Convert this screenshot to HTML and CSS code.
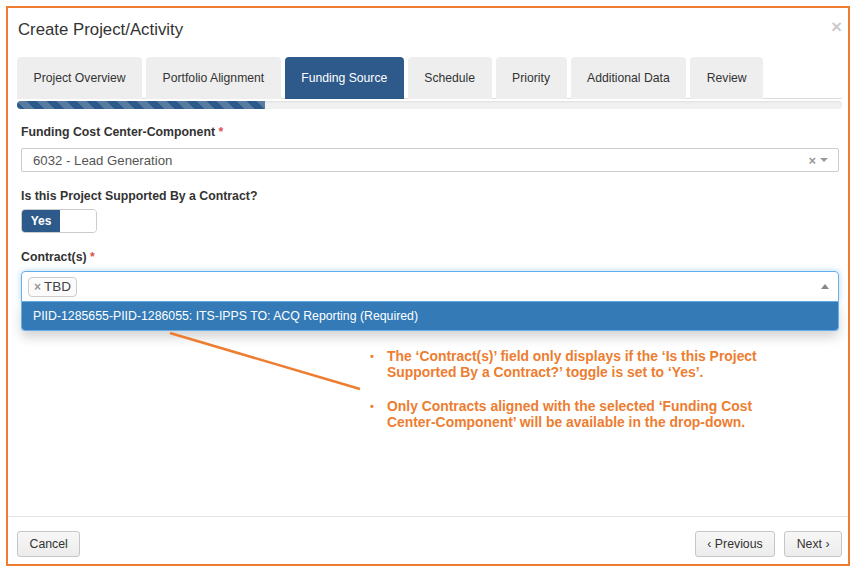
FILE: index.html
```html
<!DOCTYPE html>
<html lang="en">
<head>
    <meta charset="UTF-8">
    <meta name="viewport" content="width=device-width, initial-scale=1.0">
    <title>Create Project/Activity</title>
    <link rel="stylesheet" href="styles.css">
</head>
<body>
    <div class="modal">
        <div class="modal-header">
            <h4 class="modal-title">Create Project/Activity</h4>
            <span class="close">&times;</span>
        </div>

        <div class="modal-body">
            <ul class="nav-tabs">
                <li>Project Overview</li>
                <li>Portfolio Alignment</li>
                <li class="active">Funding Source</li>
                <li>Schedule</li>
                <li>Priority</li>
                <li>Additional Data</li>
                <li>Review</li>
            </ul>
            <div class="progress"><div class="progress-bar" style="width: 30%;"></div></div>

            <form class="wizard-form">
                <label class="field-label">Funding Cost Center-Component <span class="req">*</span></label>
                <div class="select">
                    <span class="select-value">6032 - Lead Generation</span>
                    <span class="select-clear">&times;</span>
                    <span class="caret-down"></span>
                </div>

                <label class="field-label toggle-label">Is this Project Supported By a Contract?</label>
                <div class="toggle">
                    <span class="toggle-on">Yes</span>
                    <span class="toggle-off"></span>
                </div>

                <label class="field-label multi-label">Contract(s) <span class="req">*</span></label>
                <div class="multi">
                    <span class="tag"><span class="tag-remove">&times;</span>TBD</span>
                    <span class="caret-up"></span>
                </div>
                <ul class="dropdown">
                    <li class="highlighted">PIID-1285655-PIID-1286055: ITS-IPPS TO: ACQ Reporting (Required)</li>
                </ul>

                <ul class="notes">
                    <li>The &lsquo;Contract(s)&rsquo; field only displays if the &lsquo;Is this Project<br>Supported By a Contract?&rsquo; toggle is set to &lsquo;Yes&rsquo;.</li>
                    <li>Only Contracts aligned with the selected &lsquo;Funding Cost<br>Center-Component&rsquo; will be available in the drop-down.</li>
                </ul>
            </form>

            <!-- callout pointer from the dropdown to the notes -->
            <svg class="callout-line" width="200" height="64" viewBox="0 0 200 64">
                <line x1="2" y1="2" x2="192" y2="58" stroke="#ed7d31" stroke-width="2.5"/>
            </svg>
        </div>

        <div class="modal-footer">
            <button type="button" class="btn">Cancel</button>
            <div class="btn-group">
                <button type="button" class="btn">&lsaquo; Previous</button>
                <button type="button" class="btn">Next &rsaquo;</button>
            </div>
        </div>
    </div>
</body>
</html>
```

FILE: styles.css
```css
* { box-sizing: border-box; }
body { margin: 0; font-family: "Liberation Sans", Arial, sans-serif; color: #333; background: #fff; }

.modal { margin: 6px; width: 844px; height: 560px; border: 2px solid #ed7d31; display: flex; flex-direction: column; }

.modal-header { display: flex; justify-content: space-between; align-items: flex-start; padding: 12px 6px 0 10px; }
.modal-title { margin: 0; font-size: 16.8px; font-weight: normal; line-height: 20px; color: #333; }
.close { font-size: 19px; font-weight: bold; line-height: 20px; color: #000; opacity: .2; margin-top: -3px; }

.modal-body { position: relative; flex: 1; padding: 17px 6px 0 9px; }

.nav-tabs { list-style: none; margin: 0; padding: 0; display: flex; border-bottom: 1px solid #ddd; }
.nav-tabs li { height: 42px; line-height: 42px; padding: 0 16.5px; margin-right: 4px; margin-bottom: -1px; font-size: 12.2px; color: #333; background: #eee; border-radius: 4px 4px 0 0; }
.nav-tabs li.active { background: #2e5a8b; color: #fff; }

.progress { height: 8px; margin-top: 2px; background: #f1f1f1; border-radius: 4px; overflow: hidden; box-shadow: inset 0 1px 2px rgba(0,0,0,.08); }
.progress-bar { height: 100%; background-color: #2e5a8b; background-image: linear-gradient(45deg, rgba(255,255,255,.2) 25%, transparent 25%, transparent 50%, rgba(255,255,255,.2) 50%, rgba(255,255,255,.2) 75%, transparent 75%, transparent); background-size: 20px 20px; }

.wizard-form { padding: 16px 3px 0 4px; }
.field-label { display: block; font-size: 12.3px; font-weight: bold; line-height: 15px; margin-bottom: 8px; }
.req { color: #d9534f; }
.toggle-label { margin-top: 17px; margin-bottom: 5px; }
.multi-label { margin-top: 17px; margin-bottom: 6px; }

.select { height: 24px; border: 1px solid #ccc; border-radius: 2px; display: flex; align-items: center; padding: 0 10px 0 11px; }
.select-value { flex: 1; font-size: 13.2px; color: #555; }
.select-clear { font-size: 13px; font-weight: bold; color: #999; margin-right: 4px; }
.caret-down { border-left: 4px solid transparent; border-right: 4px solid transparent; border-top: 4px solid #999; }

.toggle { display: flex; width: 76px; height: 24px; border: 1px solid #ccc; border-radius: 4px; overflow: hidden; }
.toggle-on { width: 38px; background: #2e5a8b; color: #fff; font-size: 12px; font-weight: bold; line-height: 22px; text-align: center; }
.toggle-off { flex: 1; background: #fff; }

.multi { height: 31px; border: 1px solid #66afe9; border-radius: 4px 4px 0 0; box-shadow: 0 0 6px rgba(102,175,233,.5); display: flex; align-items: center; justify-content: space-between; padding: 0 9px 0 6px; }
.tag { height: 20px; line-height: 18px; border: 1px solid #ccc; border-radius: 4px; padding: 0 5px; font-size: 13.5px; color: #444; background: #fbfbfb; }
.tag-remove { color: #999; font-weight: bold; font-size: 12px; margin-right: 3px; }
.caret-up { border-left: 4px solid transparent; border-right: 4px solid transparent; border-bottom: 5px solid #888; }

.dropdown { list-style: none; margin: 0; padding: 0; border: 1px solid #66afe9; border-top: none; border-radius: 0 0 4px 4px; box-shadow: 0 6px 12px rgba(0,0,0,.175); overflow: hidden; }
.dropdown li { height: 28px; line-height: 28px; padding: 0 11px; font-size: 12.3px; color: #fff; background: #337ab7; }

.notes { margin: 17px 0 0 0; padding: 0 0 0 366px; list-style: none; font-size: 13.9px; font-weight: bold; line-height: 16px; color: #ed7d31; }
.notes li { position: relative; margin-bottom: 18px; }
.notes li::before { content: "\2022"; position: absolute; left: -17px; font-size: 11px; }

.callout-line { position: absolute; left: 160px; top: 291px; }

.modal-footer { height: 48px; border-top: 1px solid #e5e5e5; display: flex; justify-content: space-between; padding: 14px 6px 0 9px; }
.btn-group { display: flex; gap: 9px; }
.btn { height: 26px; padding: 0 11.5px; font-family: inherit; font-size: 12.3px; color: #333; background: linear-gradient(#f7f7f7, #ececec); border: 1px solid #c6c6c6; border-radius: 3px; }
```
